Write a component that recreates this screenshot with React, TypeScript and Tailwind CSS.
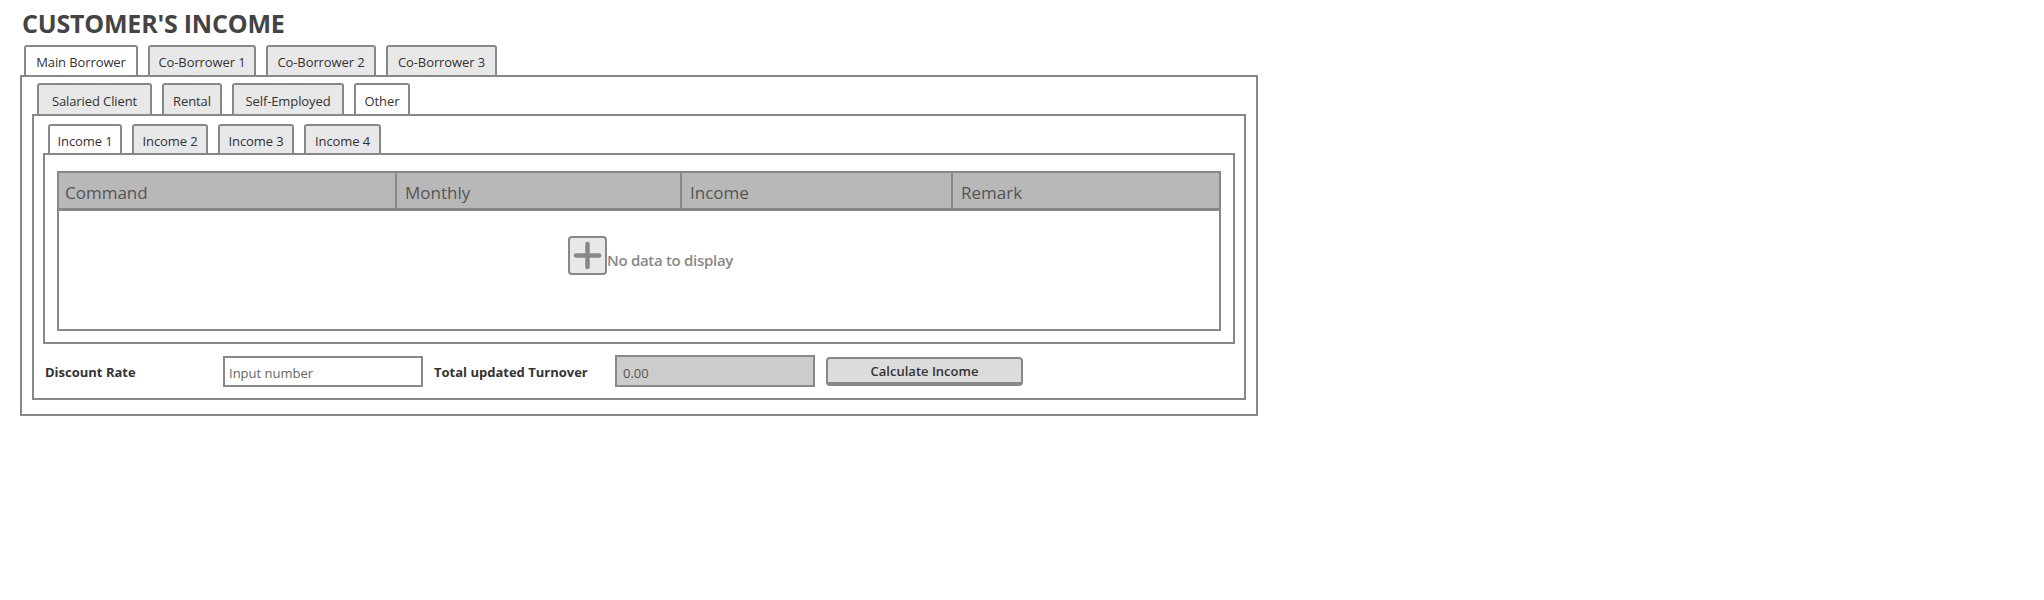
import React from "react";

const font = { fontFamily: '"Open Sans", "Noto Sans", sans-serif' };

interface TabDef {
  label: string;
  width: string;
  active?: boolean;
}

const Tab: React.FC<TabDef & { height: string }> = ({ label, width, active, height }) => (
  <div
    className={`${width} ${height} flex items-center justify-center pt-[4px] rounded-t-[3px] border-2 border-b-0 border-[#888] text-[13px] tracking-[-0.1px] text-[#333] ${
      active ? "bg-white" : "bg-[#e8e8e8]"
    }`}
  >
    {label}
  </div>
);

const TabStrip: React.FC<{ tabs: TabDef[]; height: string; className?: string }> = ({
  tabs,
  height,
  className = "",
}) => (
  <div className={`flex gap-[10px] ${className}`}>
    {tabs.map((t) => (
      <Tab key={t.label} {...t} height={height} />
    ))}
  </div>
);

const PlusButton = () => (
  <div className="w-[39px] h-[39px] rounded-[4px] border-2 border-[#888] bg-[#e8e8e8] flex items-center justify-center">
    <svg width="29" height="29" viewBox="0 0 29 29">
      <path d="M14.5 3v23M3 14.5h23" stroke="#888" strokeWidth="4.5" strokeLinecap="round" />
    </svg>
  </div>
);

const IncomeGrid = () => {
  const cols = ["Command", "Monthly", "Income", "Remark"];
  return (
    <div className="border-2 border-[#888] bg-white">
      <div className="grid grid-cols-[336px_285px_271px_1fr] h-[38px] bg-[#b8b8b8] border-b-[3px] border-[#888]">
        {cols.map((c, i) => (
          <div
            key={c}
            className={`flex items-center pt-[5px] pl-[6px] text-[17px] text-[#555] ${
              i > 0 ? "border-l-2 border-[#888] pl-[8px]" : ""
            }`}
          >
            {c}
          </div>
        ))}
      </div>
      <div className="h-[118px] flex items-start justify-center pl-[23px] pt-[25px]">
        <div className="flex items-center">
          <PlusButton />
          <span className="text-[15px] font-semibold text-[#888] mt-[9px] tracking-[-0.3px]">No data to display</span>
        </div>
      </div>
    </div>
  );
};

export default function App() {
  return (
    <div className="bg-white min-h-[600px] pl-[20px] pt-[8px]" style={font}>
      <h1 className="ml-[2px] text-[25px] leading-[31px] font-bold text-[#444] tracking-[-0.2px]">
        CUSTOMER'S INCOME
      </h1>

      <TabStrip
        className="pl-[4px] mt-[6px]"
        height="h-[30px]"
        tabs={[
          { label: "Main Borrower", width: "w-[114px]", active: true },
          { label: "Co-Borrower 1", width: "w-[108px]" },
          { label: "Co-Borrower 2", width: "w-[110px]" },
          { label: "Co-Borrower 3", width: "w-[111px]" },
        ]}
      />

      {/* borrower panel */}
      <div className="w-[1238px] border-2 border-[#888] pt-[6px] px-[10px] pb-[14px]">
        <TabStrip
          className="pl-[5px]"
          height="h-[31px]"
          tabs={[
            { label: "Salaried Client", width: "w-[115px]" },
            { label: "Rental", width: "w-[60px]" },
            { label: "Self-Employed", width: "w-[112px]" },
            { label: "Other", width: "w-[56px]", active: true },
          ]}
        />

        {/* income type panel */}
        <div className="border-2 border-[#888] pt-[8px] px-[9px] pb-[11px]">
          <TabStrip
            className="pl-[5px]"
            height="h-[29px]"
            tabs={[
              { label: "Income 1", width: "w-[74px]", active: true },
              { label: "Income 2", width: "w-[76px]" },
              { label: "Income 3", width: "w-[76px]" },
              { label: "Income 4", width: "w-[77px]" },
            ]}
          />

          <div className="border-2 border-[#888] pt-[16px] px-[12px] pb-[11px]">
            <IncomeGrid />
          </div>

          {/* totals row */}
          <div className="flex items-center mt-[11px] pl-[2px]">
            <div className="w-[178px] pt-[3px] text-[13px] font-bold text-[#333]">Discount Rate</div>
            <input
              type="text"
              placeholder="Input number"
              className="w-[200px] h-[31px] border-2 border-[#888] px-[4px] pt-[3px] text-[13px] text-[#333] placeholder:text-[#666] outline-none bg-white"
            />
            <div className="w-[181px] ml-[11px] pt-[3px] text-[13px] font-bold text-[#333]">Total updated Turnover</div>
            <input
              type="text"
              readOnly
              value="0.00"
              className="w-[200px] h-[32px] border-2 border-[#888] px-[6px] pt-[3px] text-[13px] text-[#555] bg-[#cccccc] outline-none"
            />
            <button
              type="button"
              className="w-[197px] h-[29px] ml-[11px] pt-[3px] rounded-[4px] border-2 border-b-[4px] border-[#888] bg-[#dcdcdc] text-[13px] font-semibold text-[#333] leading-none"
            >
              Calculate Income
            </button>
          </div>
        </div>
      </div>
    </div>
  );
}
